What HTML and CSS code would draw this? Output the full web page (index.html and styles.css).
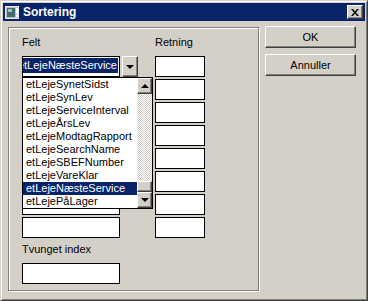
FILE: index.html
```html
<!DOCTYPE html>
<html lang="da">
<head>
    <meta charset="UTF-8">
    <meta name="viewport" content="width=device-width, initial-scale=1.0">
    <title>Sortering</title>
    <link rel="stylesheet" href="styles.css">
</head>
<body>

    <div class="window">
        <div class="titlebar">
            <svg class="app-icon" width="14" height="13" viewBox="0 0 14 13">
                <rect x="0.5" y="0.5" width="13" height="12" fill="#c0c0c0" stroke="#e8e8e8"/>
                <rect x="2" y="2" width="8" height="9" fill="#3c6e74"/>
                <rect x="3" y="3" width="4" height="3" fill="#9fc4c0"/>
                <rect x="11" y="2" width="2" height="6" fill="#ffffff"/>
                <rect x="11" y="9" width="2" height="2" fill="#ffffff"/>
            </svg>
            <span class="title">Sortering</span>
            <div class="close-btn">
                <svg width="8" height="7" viewBox="0 0 8 7">
                    <path d="M0 0h2l2 2.5L6 0h2L5 3.5 8 7H6L4 4.5 2 7H0l3-3.5z" fill="#000"/>
                </svg>
            </div>
        </div>

        <div class="content">
            <div class="group">
                <div class="fields">
                    <div class="label">Felt</div>
                    <div class="label">Retning</div>

                    <div class="combo">
                        <div class="combo-field"><span class="combo-text">etLejeNæsteService</span></div>
                        <div class="raised combo-btn"><span class="arrow-down"></span></div>
                    </div>
                    <div class="box"></div>

                    <div class="box"></div><div class="box"></div>
                    <div class="box"></div><div class="box"></div>
                    <div class="box"></div><div class="box"></div>
                    <div class="box"></div><div class="box"></div>
                    <div class="box"></div><div class="box"></div>
                    <div class="box"></div><div class="box"></div>
                    <div class="box"></div><div class="box"></div>
                </div>

                <div class="label index-label">Tvunget index</div>
                <div class="box index-box"></div>

                <!-- open drop-down list of the Felt combo -->
                <div class="dropdown">
                    <ul class="items">
                        <li>etLejeSynetSidst</li>
                        <li>etLejeSynLev</li>
                        <li>etLejeServiceInterval</li>
                        <li>etLejeÅrsLev</li>
                        <li>etLejeModtagRapport</li>
                        <li>etLejeSearchName</li>
                        <li>etLejeSBEFNumber</li>
                        <li>etLejeVareKlar</li>
                        <li class="selected">etLejeNæsteService</li>
                        <li>etLejePåLager</li>
                    </ul>
                    <div class="scrollbar">
                        <div class="raised sb-btn"><span class="arrow-up"></span></div>
                        <div class="sb-track"></div>
                        <div class="raised sb-thumb"></div>
                        <div class="raised sb-btn"><span class="arrow-down"></span></div>
                    </div>
                </div>
            </div>

            <div class="buttons">
                <div class="raised btn">OK</div>
                <div class="raised btn">Annuller</div>
            </div>
        </div>
    </div>

</body>
</html>
```

FILE: styles.css
```css
/* Classic dialog look */
body {
    margin: 0;
    padding: 0;
    font-family: "Liberation Sans", Arial, sans-serif;
    font-size: 11px;
    color: #000;
    background-color: #d4d0c8;
}

.window {
    width: 368px;
    height: 301px;
    box-sizing: border-box;
    background-color: #d4d0c8;
    border: 1px solid;
    border-color: #d4d0c8 #404040 #404040 #d4d0c8;
    box-shadow: inset 1px 1px #fff, inset -1px -1px #808080;
    padding: 2px;
}

.raised {
    background-color: #d4d0c8;
    border: 1px solid;
    border-color: #fff #404040 #404040 #fff;
    box-shadow: inset -1px -1px #808080;
    box-sizing: border-box;
}

/* Title bar */
.titlebar {
    height: 18px;
    background-color: #0a246a;
    display: flex;
    align-items: center;
    padding: 0 2px 0 2px;
}

.app-icon {
    margin-right: 4px;
}

.title {
    color: #fff;
    font-weight: bold;
    font-size: 12px;
    flex: 1;
}

.close-btn {
    width: 16px;
    height: 14px;
    box-sizing: border-box;
    background-color: #d4d0c8;
    border: 1px solid;
    border-color: #fff #404040 #404040 #fff;
    box-shadow: inset -1px -1px #808080;
    display: flex;
    align-items: center;
    justify-content: center;
}

/* Body */
.content {
    display: flex;
    padding: 6px 0 0 5px;
}

.group {
    position: relative;
    width: 251px;
    height: 264px;
    box-sizing: border-box;
    border: 1px solid #808080;
    box-shadow: inset 1px 1px #fff, 1px 1px #fff;
    padding: 8px 0 0 13px;
}

.fields {
    display: grid;
    grid-template-columns: 116px 50px;
    grid-template-rows: 18px repeat(8, 21px);
    column-gap: 17px;
    row-gap: 2px;
}

.label {
    line-height: 13px;
}

.box {
    width: 98px;
    height: 21px;
    box-sizing: border-box;
    background-color: #fff;
    border: 1px solid #000;
}

.fields .box:nth-child(even) {
    width: 50px;
}

.combo {
    display: flex;
    gap: 2px;
}

.combo-field {
    width: 98px;
    height: 21px;
    box-sizing: border-box;
    background-color: #fff;
    border: 1px solid #000;
    padding: 1px;
    display: flex;
    justify-content: flex-end;
    overflow: hidden;
}

.combo-text {
    background-color: #0a246a;
    color: #fff;
    line-height: 15px;
    height: 15px;
    white-space: nowrap;
    flex-shrink: 0;
    padding-right: 1px;
}

.combo-btn {
    width: 16px;
    height: 21px;
    display: flex;
    align-items: center;
    justify-content: center;
}

.arrow-down,
.arrow-up {
    width: 0;
    height: 0;
    border-left: 4px solid transparent;
    border-right: 4px solid transparent;
}

.arrow-down {
    border-top: 4px solid #000;
}

.arrow-up {
    border-bottom: 4px solid #000;
}

.index-label {
    margin-top: 5px;
}

.index-box {
    margin-top: 7px;
}

/* Drop-down list */
.dropdown {
    position: absolute;
    left: 13px;
    top: 49px;
    width: 131px;
    height: 132px;
    box-sizing: border-box;
    border: 1px solid #000;
    background-color: #fff;
    display: flex;
}

.items {
    list-style: none;
    margin: 0;
    padding: 0;
    width: 114px;
}

.items li {
    height: 13px;
    line-height: 13px;
    padding-left: 3px;
    white-space: nowrap;
}

.items li.selected {
    background-color: #0a246a;
    color: #fff;
}

.scrollbar {
    width: 15px;
    display: flex;
    flex-direction: column;
}

.sb-btn {
    height: 16px;
    display: flex;
    align-items: center;
    justify-content: center;
}

.sb-track {
    flex: 1;
    background: repeating-conic-gradient(#d4d0c8 0 25%, #fff 0 50%) 0 0 / 2px 2px;
}

.sb-thumb {
    height: 11px;
}

/* Dialog buttons */
.buttons {
    display: flex;
    flex-direction: column;
    gap: 6px;
    margin-left: 6px;
    margin-top: -1px;
}

.btn {
    width: 91px;
    height: 22px;
    display: flex;
    align-items: center;
    justify-content: center;
}
```
